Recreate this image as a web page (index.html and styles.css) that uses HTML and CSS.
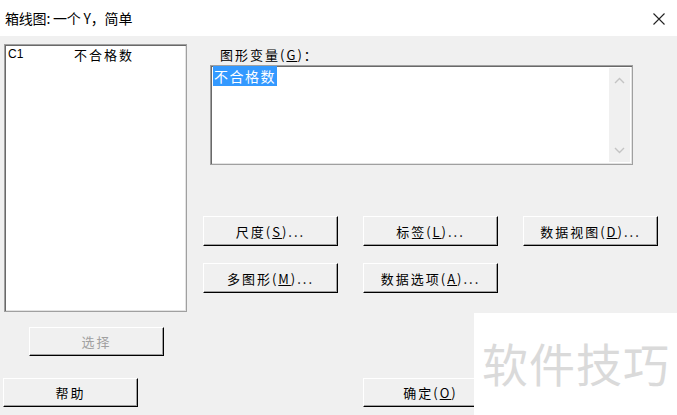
FILE: index.html
```html
<!DOCTYPE html>
<html lang="zh">
<head>
    <meta charset="UTF-8">
    <title>箱线图: 一个 Y，简单</title>
    <link rel="stylesheet" href="styles.css">
</head>
<body>
    <div class="titlebar">
        <span class="title">箱线图: 一个 Y，简单</span>
        <svg class="close" width="12" height="12" viewBox="0 0 12 12">
            <path d="M0.5 0.5 L11.5 11.5 M11.5 0.5 L0.5 11.5" stroke="#222" stroke-width="1.1" fill="none"/>
        </svg>
    </div>

    <div class="dialog">
        <div class="main">
            <div class="left">
                <div class="varlist">
                    <div class="var-row">
                        <span class="var-id">C1</span>
                        <span class="var-name">不合格数</span>
                    </div>
                </div>
                <button class="btn btn-select" disabled>选择</button>
            </div>

            <div class="right">
                <div class="field-label">图形变量(<u>G</u>)：</div>
                <div class="textbox">
                    <div class="textbox-content"><span class="selected">不合格数</span></div>
                    <div class="scrollbar">
                        <svg width="11" height="7" viewBox="0 0 11 7"><path d="M1 6 L5.5 1.5 L10 6" stroke="#c4c4c4" stroke-width="1.4" fill="none"/></svg>
                        <svg width="11" height="7" viewBox="0 0 11 7"><path d="M1 1 L5.5 5.5 L10 1" stroke="#c4c4c4" stroke-width="1.4" fill="none"/></svg>
                    </div>
                </div>

                <div class="btn-grid">
                    <button class="btn">尺度(<u>S</u>)...</button>
                    <button class="btn">标签(<u>L</u>)...</button>
                    <button class="btn">数据视图(<u>D</u>)...</button>
                    <button class="btn">多图形(<u>M</u>)...</button>
                    <button class="btn">数据选项(<u>A</u>)...</button>
                </div>
            </div>
        </div>

        <div class="footer">
            <button class="btn btn-help">帮助</button>
            <button class="btn btn-ok">确定(<u>O</u>)</button>
        </div>
    </div>

    <div class="watermark">软件技巧</div>
</body>
</html>
```

FILE: styles.css
```css
* {
    margin: 0;
    padding: 0;
    box-sizing: border-box;
}

body {
    width: 677px;
    height: 415px;
    overflow: hidden;
    position: relative;
    background: #f0f0f0;
    font-family: "Noto Sans CJK SC", "Liberation Sans", sans-serif;
    color: #000;
}

.titlebar {
    height: 36px;
    background: #fff;
    display: flex;
    align-items: center;
    justify-content: space-between;
    padding: 0 12px 0 5px;
}

.title {
    font-size: 14px;
    letter-spacing: -0.2px;
}

.close {
    margin-top: 1px;
}

.dialog {
    padding-top: 8px;
}

.main {
    display: flex;
}

.left {
    width: 183px;
    margin-left: 4px;
    display: flex;
    flex-direction: column;
}

.varlist {
    height: 268px;
    background: #fff;
    border: 1px solid #a0a0a0;
    box-shadow: inset 1px 1px 0 #696969, inset -1px -1px 0 #e3e3e3;
    padding: 1px 2px;
}

.var-row {
    display: flex;
    font-size: 13px;
    line-height: 17px;
}

.var-id {
    width: 67px;
    padding-left: 1px;
    font-family: "Liberation Sans", sans-serif;
    font-size: 12px;
}

.var-name {
    letter-spacing: 2px;
}

.btn {
    width: 135px;
    height: 29px;
    background: #f0f0f0;
    border: 1px solid;
    border-color: #fff #000 #000 #fff;
    box-shadow: inset -1px -1px 0 #a0a0a0;
    font-family: "Noto Sans CJK SC", "Liberation Sans", sans-serif;
    font-size: 13px;
    letter-spacing: 2px;
    color: #000;
}

.btn u {
    text-decoration: underline;
}

.btn-select {
    margin: 15px 0 0 25px;
    color: #a0a0a0;
    letter-spacing: 2px;
}

.right {
    margin-left: 16px;
    width: 460px;
}

.field-label {
    font-size: 13px;
    line-height: 17px;
    padding-left: 17px;
    margin-top: 2px;
    letter-spacing: 2px;
}

.textbox {
    margin: 2px 0 0 7px;
    width: 423px;
    height: 100px;
    background: #fff;
    border: 1px solid #a0a0a0;
    box-shadow: inset 1px 1px 0 #696969, inset -1px -1px 0 #e3e3e3;
    display: flex;
    padding: 2px;
}

.textbox-content {
    flex: 1;
    font-size: 14px;
    line-height: 16px;
}

.selected {
    background: #3399ff;
    color: #fff;
    letter-spacing: 1.5px;
    padding: 0 1px;
}

.scrollbar {
    width: 21px;
    background: #f0f0f0;
    display: flex;
    flex-direction: column;
    justify-content: space-between;
    align-items: center;
    padding: 9px 0 8px;
}

.btn-grid {
    margin-top: 51px;
    display: grid;
    grid-template-columns: repeat(3, 135px);
    column-gap: 25px;
    row-gap: 17px;
}

.btn-grid .btn {
    height: 30px;
}

.footer {
    margin-top: 22px;
    display: flex;
}

.btn-help {
    margin-left: 3px;
}

.btn-ok {
    margin-left: 225px;
}

.watermark {
    position: absolute;
    left: 474px;
    top: 313px;
    width: 203px;
    height: 102px;
    background: #fff;
    color: #dadada;
    font-size: 46px;
    line-height: 1;
    padding: 26px 0 0 8px;
    letter-spacing: 1px;
}
```
